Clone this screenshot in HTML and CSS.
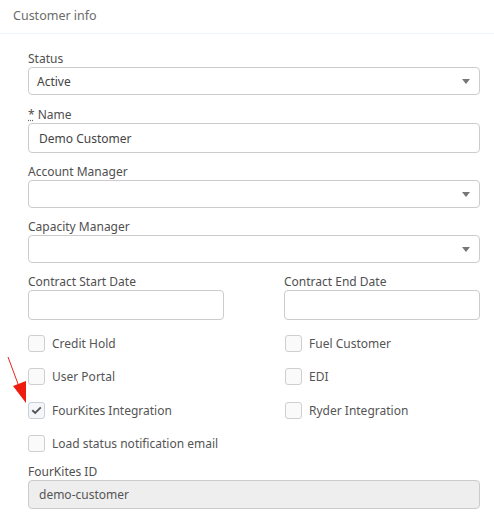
FILE: index.html
```html
<!DOCTYPE html>
<html>
<head>
<meta charset="utf-8">
<link rel="stylesheet" href="styles.css">
</head>
<body>
<div class="panel">
  <div class="panel-head">Customer info</div>
  <div class="panel-body">
    <div class="field">
      <label class="lbl">Status</label>
      <div class="select"><span>Active</span><span class="caret"></span></div>
    </div>
    <div class="field">
      <label class="lbl"><span class="req">*</span> Name</label>
      <div class="input">Demo Customer</div>
    </div>
    <div class="field">
      <label class="lbl">Account Manager</label>
      <div class="select"><span></span><span class="caret"></span></div>
    </div>
    <div class="field">
      <label class="lbl">Capacity Manager</label>
      <div class="select"><span></span><span class="caret"></span></div>
    </div>
    <div class="cols">
      <div class="field">
        <label class="lbl">Contract Start Date</label>
        <div class="input"></div>
      </div>
      <div class="field">
        <label class="lbl">Contract End Date</label>
        <div class="input"></div>
      </div>
    </div>
    <div class="checks">
      <div class="check"><span class="box"></span>Credit Hold</div>
      <div class="check"><span class="box"></span>Fuel Customer</div>
      <div class="check"><span class="box"></span>User Portal</div>
      <div class="check"><span class="box"></span>EDI</div>
      <div class="check"><span class="box on"><svg viewBox="0 0 16 16" width="16" height="16"><path d="M3.5 8.3 L6.6 11.2 L12.6 5.2" fill="none" stroke="#555" stroke-width="2"/></svg></span>FourKites Integration</div>
      <div class="check"><span class="box"></span>Ryder Integration</div>
      <div class="check full"><span class="box"></span>Load status notification email</div>
    </div>
    <div class="field fk">
      <label class="lbl">FourKites ID</label>
      <div class="input disabled">demo-customer</div>
    </div>
  </div>
  <svg class="arrow" width="40" height="60" viewBox="0 350 40 60">
    <line x1="8" y1="357" x2="21" y2="392" stroke="#e8251a" stroke-width="1"/>
    <polygon points="13,386 26,403 26,381" fill="#ee1c0f"/>
  </svg>
</div>
</body>
</html>
```

FILE: styles.css
```css
* { box-sizing: border-box; }
html, body { margin: 0; padding: 0; background: #fff; }
body {
  font-family: "Noto Sans", "Open Sans", sans-serif;
  font-size: 12px;
  color: #555;
  width: 494px;
  height: 517px;
  overflow: hidden;
}
.panel { position: relative; }
.panel-head {
  height: 34px;
  padding: 6px 13px 0;
  color: #6b6b6b;
  font-size: 12.5px;
  border-bottom: 1px solid #edf3f9;
  line-height: 20px;
}
.panel-body {
  padding: 16px 14px 0 28px;
  display: flex;
  flex-direction: column;
}
.field { display: flex; flex-direction: column; }
.panel-body > .field + .field,
.panel-body > .cols { margin-top: 10px; }
.panel-body > .field:nth-child(2) { margin-top: 11px; }
.lbl { line-height: 17px; height: 17px; color: #505050; }
.req { text-decoration: underline dotted #666; }
.select, .input {
  border: 1px solid #cccccc;
  border-radius: 4px;
  height: 28px;
  display: flex;
  align-items: center;
  padding: 0 9px 0 8px;
  color: #444;
  background: #fff;
}
.input { height: 30px; padding-left: 10px; }
.select { justify-content: space-between; }
.caret {
  width: 0; height: 0;
  border-left: 4px solid transparent;
  border-right: 4px solid transparent;
  border-top: 5px solid #777;
}
.cols {
  display: grid;
  grid-template-columns: 196px 196px;
  column-gap: 60px;
}
.checks {
  display: grid;
  grid-template-columns: 257px 1fr;
  row-gap: 16.4px;
  margin-top: 15px;
}
.check {
  display: flex;
  align-items: center;
  height: 17px;
  color: #555;
}
.check.full { grid-column: 1 / 3; }
.box {
  width: 17px; height: 17px;
  border: 1px solid #cfcfcf;
  border-radius: 3px;
  background: #fafafa;
  margin-right: 7px;
  display: inline-flex;
  align-items: center;
  justify-content: center;
}
.box.on { background: #f4f6fa; border-color: #c9cfd8; }
.box svg { display: block; }
.panel-body > .fk { margin-top: 11px; }
.input.disabled { background: #eeeeee; color: #555; height: 29px; }
.arrow { position: absolute; left: 0; top: 350px; }
```
